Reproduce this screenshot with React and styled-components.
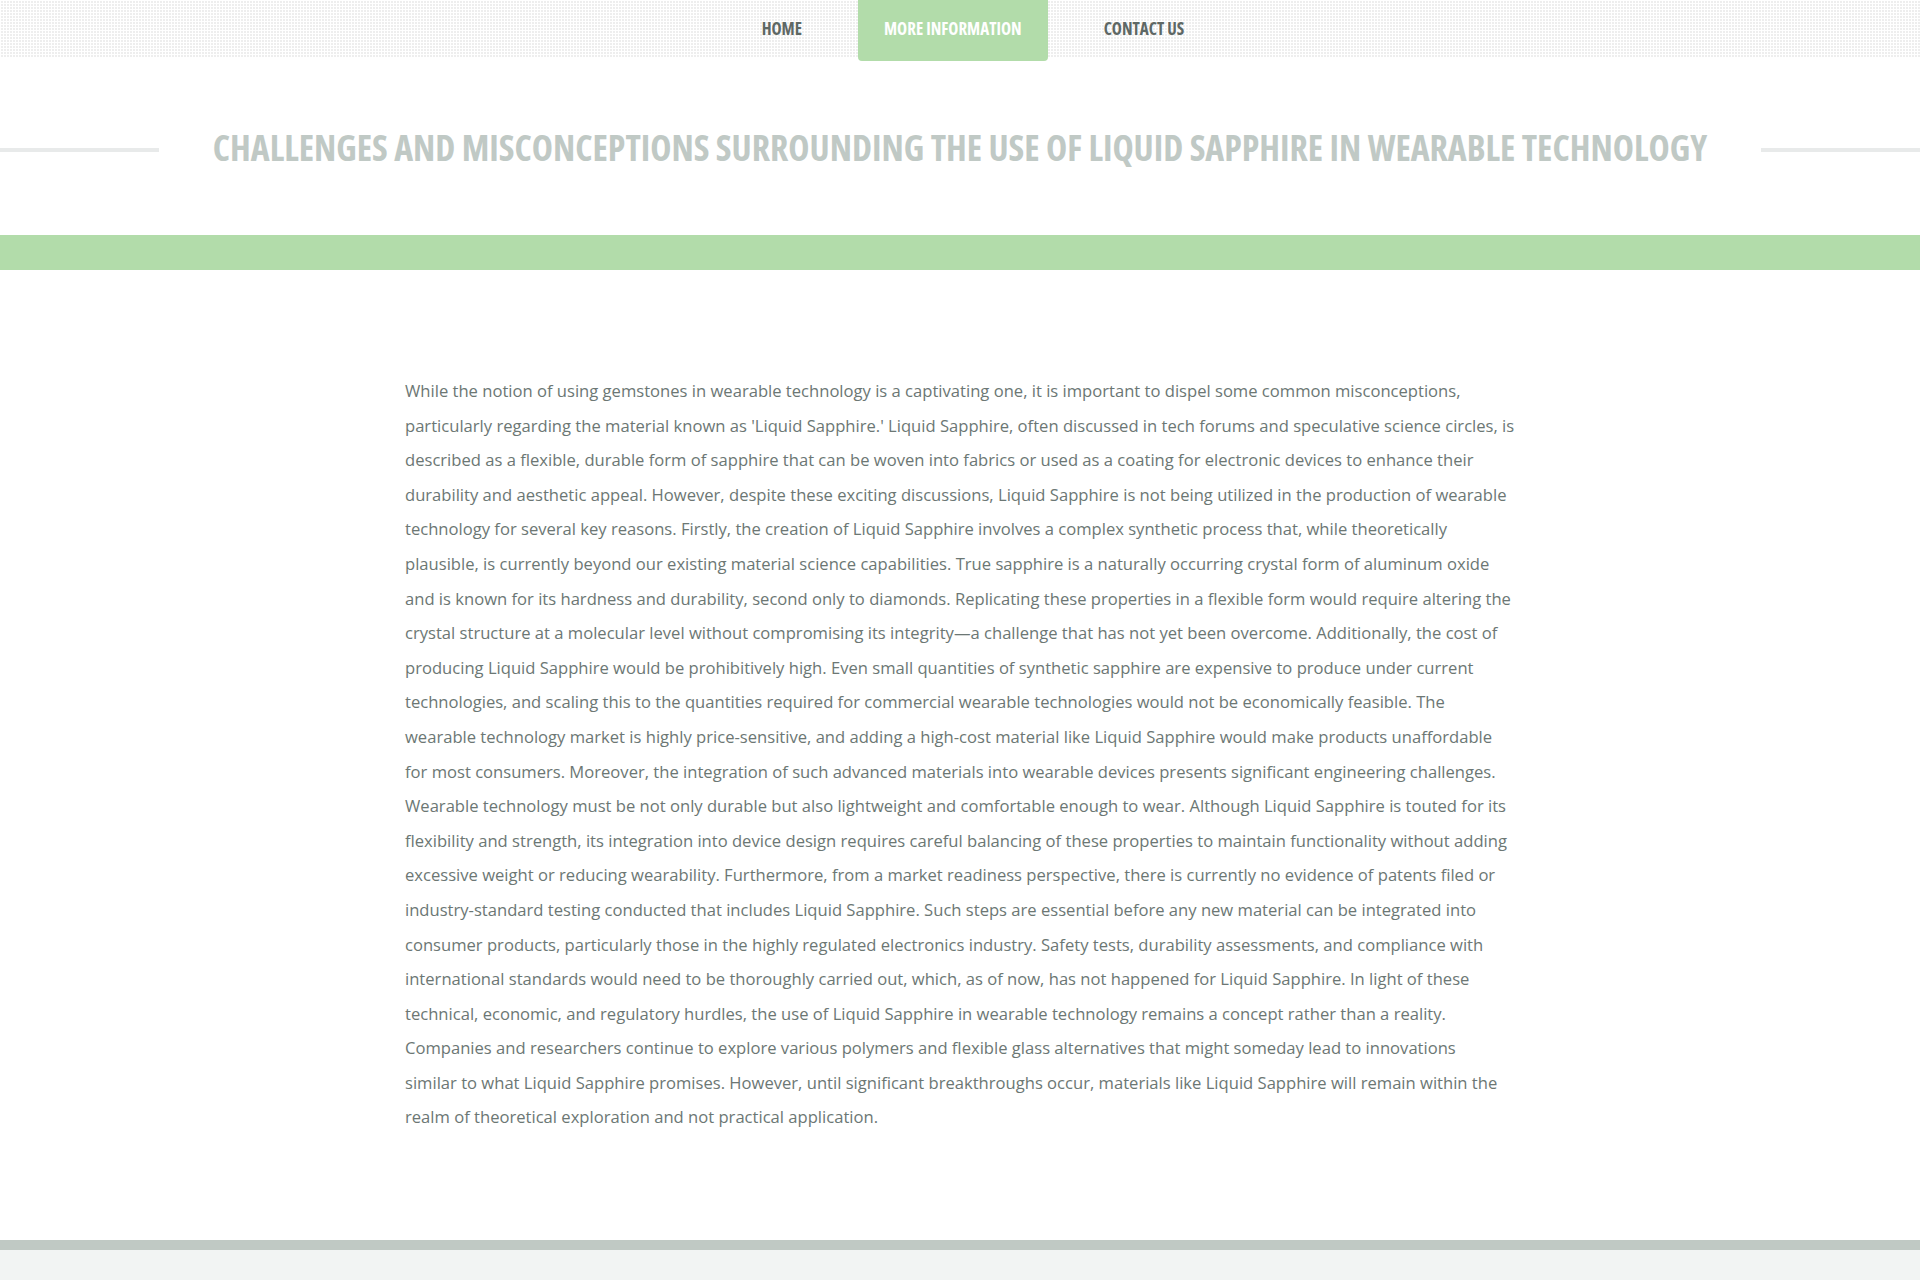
import React from "react";
import styled, { createGlobalStyle } from "styled-components";

const GlobalStyle = createGlobalStyle`
  html, body {
    margin: 0;
    padding: 0;
    background: #ffffff;
  }
  body {
    font-family: "Open Sans", "Liberation Sans", sans-serif;
  }
`;

const navItems = [
  { label: "Home" },
  { label: "More Information", active: true },
  { label: "Contact Us" },
];

const text = `While the notion of using gemstones in wearable technology is a captivating one, it is important to dispel some common misconceptions, particularly regarding the material known as 'Liquid Sapphire.' Liquid Sapphire, often discussed in tech forums and speculative science circles, is described as a flexible, durable form of sapphire that can be woven into fabrics or used as a coating for electronic devices to enhance their durability and aesthetic appeal. However, despite these exciting discussions, Liquid Sapphire is not being utilized in the production of wearable technology for several key reasons. Firstly, the creation of Liquid Sapphire involves a complex synthetic process that, while theoretically plausible, is currently beyond our existing material science capabilities. True sapphire is a naturally occurring crystal form of aluminum oxide and is known for its hardness and durability, second only to diamonds. Replicating these properties in a flexible form would require altering the crystal structure at a molecular level without compromising its integrity\u2014a challenge that has not yet been overcome. Additionally, the cost of producing Liquid Sapphire would be prohibitively high. Even small quantities of synthetic sapphire are expensive to produce under current technologies, and scaling this to the quantities required for commercial wearable technologies would not be economically feasible. The wearable technology market is highly price-sensitive, and adding a high-cost material like Liquid Sapphire would make products unaffordable for most consumers. Moreover, the integration of such advanced materials into wearable devices presents significant engineering challenges. Wearable technology must be not only durable but also lightweight and comfortable enough to wear. Although Liquid Sapphire is touted for its flexibility and strength, its integration into device design requires careful balancing of these properties to maintain functionality without adding excessive weight or reducing wearability. Furthermore, from a market readiness perspective, there is currently no evidence of patents filed or industry-standard testing conducted that includes Liquid Sapphire. Such steps are essential before any new material can be integrated into consumer products, particularly those in the highly regulated electronics industry. Safety tests, durability assessments, and compliance with international standards would need to be thoroughly carried out, which, as of now, has not happened for Liquid Sapphire. In light of these technical, economic, and regulatory hurdles, the use of Liquid Sapphire in wearable technology remains a concept rather than a reality. Companies and researchers continue to explore various polymers and flexible glass alternatives that might someday lead to innovations similar\u00a0to what Liquid Sapphire promises. However, until significant breakthroughs occur, materials like Liquid Sapphire will remain within the realm of theoretical exploration and not practical application.`;

const App = () => {
  return (
    <>
      <GlobalStyle />
      <NavBar>
        <NavList>
          {navItems.map((item) => (
            <NavLink key={item.label} href="#" $active={item.active}>
              {item.label}
            </NavLink>
          ))}
        </NavList>
      </NavBar>
      <TitleSection>
        <Rule />
        <Title>
          Challenges and Misconceptions Surrounding the Use of Liquid Sapphire
          in Wearable Technology
        </Title>
        <Rule />
      </TitleSection>
      <Band />
      <Content>
        <Container>
          <Paragraph>{text}</Paragraph>
        </Container>
      </Content>
      <Footer />
    </>
  );
};

export default App;

const NavBar = styled.nav`
  height: 57px;
  background-color: #eeeeee;
  background-image: linear-gradient(90deg, #ffffff 1px, transparent 1px),
    linear-gradient(#ffffff 1px, transparent 1px);
  background-size: 3px 3px;
  position: relative;
  z-index: 1;
`;

const NavList = styled.div`
  display: flex;
  justify-content: center;
  gap: 30px;
  padding-left: 26px;
`;

const NavLink = styled.a`
  display: flex;
  align-items: center;
  height: 61px;
  padding: 0 26px 4px;
  box-sizing: border-box;
  font-family: "Open Sans", "Liberation Sans Narrow", sans-serif;
  font-stretch: 75%;
  font-weight: 700;
  font-size: 17px;
  text-transform: uppercase;
  text-decoration: none;
  color: ${(p) => (p.$active ? "#ffffff" : "#5e6865")};
  background: ${(p) => (p.$active ? "#b2dcaa" : "transparent")};
  border-radius: 0 0 4px 4px;
`;

const TitleSection = styled.header`
  display: flex;
  align-items: center;
  gap: 54px;
  padding: 69px 0 67px;
`;

const Rule = styled.span`
  flex: 1;
  height: 4px;
  margin-top: 6px;
  background: #e8eaea;
`;

const Title = styled.h1`
  margin: 0;
  flex: none;
  font-family: "Open Sans", "Liberation Sans Narrow", sans-serif;
  font-stretch: 75%;
  font-weight: 700;
  font-size: 35.8px;
  line-height: 42px;
  text-transform: uppercase;
  color: #c0c9c5;
  white-space: nowrap;
`;

const Band = styled.div`
  height: 35px;
  background: #b2dcaa;
`;

const Content = styled.main`
  padding: 104px 0 105px;
`;

const Container = styled.div`
  width: 1140px;
  margin: 0 auto;
  padding: 0 15px;
  box-sizing: border-box;
`;

const Paragraph = styled.p`
  margin: 0;
  font-family: "Open Sans", sans-serif;
  font-size: 16.6px;
  line-height: 34.6px;
  color: #6c7774;
`;

const Footer = styled.footer`
  height: 60px;
  border-top: 10px solid #c0c9c4;
  background: #f2f4f3;
`;
